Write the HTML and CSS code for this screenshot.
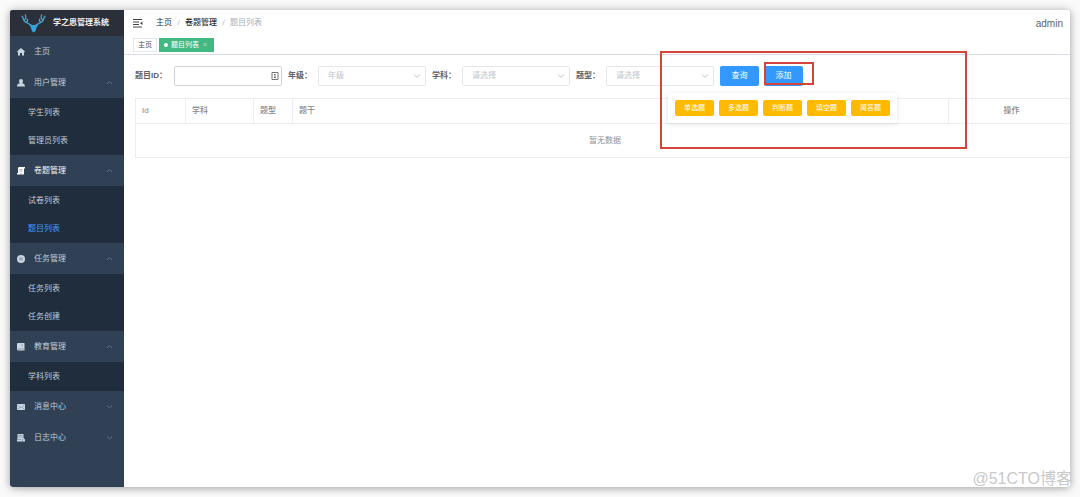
FILE: index.html
```html
<!DOCTYPE html>
<html lang="zh-CN">
<head>
<meta charset="utf-8">
<title>学之思管理系统</title>
<link rel="stylesheet" href="styles.css">
</head>
<body>
<div class="window">
  <aside class="sidebar">
    <div class="brand">
      <svg class="brand-logo" viewBox="0 0 26 20" aria-hidden="true">
        <g fill="none" stroke="#4ba6cc" stroke-width="1.3" stroke-linecap="round">
          <path d="M11 13C8 9.500 3 10 2.500 6C2.300 4.500 1.500 3.500 1 3M3 7C5 6.500 5.500 4 4.500 1.500M5.500 9.500C7 8.500 7 7 6.500 6"/>
          <path d="M15 13C18 9.500 23 10 23.500 6C23.700 4.500 24.500 3.500 25 3M23 7C21 6.500 20.500 4 21.500 1.500M20.500 9.500C19 8.500 19 7 19.500 6"/>
        </g>
        <path fill="#35a3dc" d="M6.500 9.500L11.500 12h3l5-2.500l-3 4.500l-1.500 4.500L13 20l-1.500-1.500L10 14z"/>
      </svg>
      <span>学之思管理系统</span>
    </div>
    <nav>
      <a class="item" href="#"><svg class="icon" viewBox="0 0 16 16"><path d="M8 0L0 7l1 1.500L2 8v7h4v-5h4v5h4V8l1 .5L16 7z"/></svg><span>主页</span></a>
      <a class="item" href="#"><svg class="icon" viewBox="0 0 16 16"><path d="M8 0a4 4 0 0 1 4 4c0 2-1 3.500-2 4.500c3 .8 6 1.500 6 6.500H0c0-5 3-5.700 6-6.500C5 7.500 4 6 4 4a4 4 0 0 1 4-4z"/></svg><span>用户管理</span><svg class="arrow" viewBox="0 0 8 8"><path d="M1 5.500L4 3l3 2.500"/></svg></a>
      <div class="submenu"><a href="#">学生列表</a><a href="#">管理员列表</a></div>
      <a class="item current" href="#"><svg class="icon" viewBox="0 0 16 16"><path d="M3 0h13v3h-2v12H0v-3h2V3z"/><path class="cut" d="M5 5h6M5 8h6M8 11v4"/></svg><span>卷题管理</span><svg class="arrow" viewBox="0 0 8 8"><path d="M1 5.500L4 3l3 2.500"/></svg></a>
      <div class="submenu"><a href="#">试卷列表</a><a class="selected" href="#">题目列表</a></div>
      <a class="item" href="#"><svg class="icon" viewBox="0 0 16 16"><circle cx="8" cy="8" r="8"/><path class="cut" d="M4 6h8M4 8h8M5 10h6"/></svg><span>任务管理</span><svg class="arrow" viewBox="0 0 8 8"><path d="M1 5.500L4 3l3 2.500"/></svg></a>
      <div class="submenu"><a href="#">任务列表</a><a href="#">任务创建</a></div>
      <a class="item" href="#"><svg class="icon" viewBox="0 0 16 16"><path d="M1 0h14v15H2L0 13V2z"/><path class="cut" d="M2 12h12M10 2v5"/></svg><span>教育管理</span><svg class="arrow" viewBox="0 0 8 8"><path d="M1 5.500L4 3l3 2.500"/></svg></a>
      <div class="submenu"><a href="#">学科列表</a></div>
      <a class="item" href="#"><svg class="icon" viewBox="0 0 16 16"><path d="M0 2h16v12H0z"/><path class="cut" d="M1 4l7 6l7-6M1 13l4-4M15 13l-4-4"/></svg><span>消息中心</span><svg class="arrow" viewBox="0 0 8 8"><path d="M1 3l3 2.500L7 3"/></svg></a>
      <a class="item" href="#"><svg class="icon" viewBox="0 0 16 16"><path d="M1 0h12v8l3 3v4H0v-4h1z"/><path class="cut" d="M3 3h8M3 6h8M2 11h6M11 9v5"/></svg><span>日志中心</span><svg class="arrow" viewBox="0 0 8 8"><path d="M1 3l3 2.500L7 3"/></svg></a>
    </nav>
  </aside>
  <main class="main">
    <header class="topbar">
      <button class="fold" aria-label="收起菜单"><svg viewBox="0 0 10 10"><path d="M0 1.500h9M0 4h6M0 6.500h6M0 9h9" fill="none" stroke="#444" stroke-width="1"/><path d="M9.500 3.500v3.500L7 5.200z" fill="#444"/></svg></button>
      <nav class="crumbs"><a href="#">主页</a><i>/</i><a class="strong" href="#">卷题管理</a><i>/</i><span>题目列表</span></nav>
      <span class="user">admin</span>
    </header>
    <div class="tags">
      <a class="tag" href="#">主页</a>
      <a class="tag active" href="#"><span class="dot"></span>题目列表<span class="close">×</span></a>
    </div>
    <section class="content">
      <form class="filters">
        <label for="qid">题目ID：</label>
        <div class="field"><input id="qid" type="text"><svg class="autofill" viewBox="0 0 8 8"><path d="M1 .5h6v7H1zM4 2v3.500M3 2.500h1M3 5.500h2" fill="none" stroke="#777"/></svg></div>
        <label for="grade">年级：</label>
        <div class="field"><select id="grade"><option>年级</option></select><svg class="chevron" viewBox="0 0 8 8"><path d="M1 2.500L4 5.500l3-3"/></svg></div>
        <label for="subject">学科：</label>
        <div class="field"><select id="subject"><option>请选择</option></select><svg class="chevron" viewBox="0 0 8 8"><path d="M1 2.500L4 5.500l3-3"/></svg></div>
        <label for="type">题型：</label>
        <div class="field"><select id="type"><option>请选择</option></select><svg class="chevron" viewBox="0 0 8 8"><path d="M1 2.500L4 5.500l3-3"/></svg></div>
        <button class="primary" type="button">查询</button>
        <div class="add">
          <button class="primary" type="button">添加</button>
          <div class="mark mark-button"></div>
          <div class="popover">
            <button type="button">单选题</button><button type="button">多选题</button><button type="button">判断题</button><button type="button">填空题</button><button type="button">简答题</button>
          </div>
          <div class="mark mark-area"></div>
        </div>
      </form>
      <table class="list">
        <colgroup><col class="c-id"><col class="c-subject"><col class="c-type"><col><col class="c-action"></colgroup>
        <thead><tr><th>Id</th><th>学科</th><th>题型</th><th>题干</th><th class="center">操作</th></tr></thead>
        <tbody><tr><td colspan="5">暂无数据</td></tr></tbody>
      </table>
    </section>
  </main>
</div>
<div class="watermark">@51CTO博客</div>
</body>
</html>
```
FILE: styles.css
```css
* { box-sizing: border-box; }
body {
  margin: 0;
  padding: 10px;
  height: 100vh;
  background: #fafafa;
  color: #606266;
  font: 8px/12px "Liberation Sans", "Noto Sans CJK SC", sans-serif;
  overflow: hidden;
}
a { color: inherit; text-decoration: none; }
button, input, select { font: inherit; margin: 0; }
.window {
  display: flex;
  height: 100%;
  border-radius: 3px;
  overflow: hidden;
  background: #fff;
  box-shadow: 0 1px 8px rgba(0, 0, 0, .38);
}

.sidebar { flex: 0 0 114px; background: #304156; color: #bfcbd9; }
.brand {
  display: flex;
  align-items: center;
  gap: 7px;
  height: 26px;
  padding: 0 11px;
  background: #2b2f3a;
  color: #f0f0f0;
  font-weight: bold;
  white-space: nowrap;
}
.brand-logo { width: 25px; height: 20px; flex: none; }
.item { display: flex; align-items: center; height: 31px; padding: 0 11px 0 7px; }
.item span { flex: 1; }
.icon { width: 8px; height: 8px; margin-right: 9px; fill: #c9d6e2; }
.icon .cut { fill: none; stroke: #5d6f82; stroke-width: 1; }
.arrow { width: 7px; height: 7px; fill: none; stroke: #66778b; stroke-width: 1; }
.current { color: #f4f4f5; }
.current .icon { fill: #fff; }
.submenu { padding-top: 1px; background: #1f2d3d; }
.submenu a { display: flex; align-items: center; height: 28px; padding-left: 18px; }
.submenu .selected { color: #409eff; }

.main { flex: 1; min-width: 0; }
.topbar { display: flex; align-items: center; height: 25px; padding: 0 7px 0 9px; }
.fold { display: flex; padding: 0; border: 0; background: none; }
.fold svg { width: 10px; height: 10px; }
.crumbs { display: flex; flex: 1; margin-left: 13px; color: #303133; }
.crumbs i { width: 13px; text-align: center; color: #b4b8c0; font-style: normal; }
.crumbs .strong { font-weight: 500; }
.crumbs span { color: #a8afb8; }
.user { padding-top: 3px; font-size: 10px; }
.tags { display: flex; gap: 2px; height: 20px; padding: 3px 9px 2px; border-bottom: 1px solid #d8dce5; }
.tag {
  display: flex;
  align-items: center;
  padding: 0 4px;
  border: 1px solid #e4e7ee;
  color: #495060;
  font-size: 7px;
}
.tag.active { border-color: #42b983; background: #42b983; color: #fff; }
.dot { width: 4px; height: 4px; margin-right: 3px; border-radius: 50%; background: #fff; }
.close { margin: 0 2px 0 4px; font-size: 7px; opacity: .6; }

.content { padding: 11px 0 0 11px; }
.filters { display: flex; align-items: center; height: 20px; }
.filters label { flex: none; width: 30px; font-weight: bold; white-space: nowrap; }
.filters label:first-child { width: 39px; }
.field { position: relative; flex: 0 1 108px; margin-right: 6px; }
.field input, .field select {
  display: block;
  width: 100%;
  height: 20px;
  padding: 0 9px;
  border: 1px solid #e4e7ed;
  border-radius: 2px;
  background: #fff;
  color: #c0c4cc;
  appearance: none;
}
.field input { border-color: #cfd2d8; color: #606266; }
.chevron, .autofill { position: absolute; right: 5px; top: 6px; width: 8px; height: 8px; pointer-events: none; }
.autofill { right: 3px; }
.chevron { fill: none; stroke: #c0c4cc; stroke-width: 1; }
.primary {
  width: 39px;
  height: 20px;
  padding: 0;
  border: 0;
  border-radius: 2px;
  background: #3399ff;
  color: #fff;
}
.add { position: relative; margin-left: 5px; }
.popover {
  position: absolute;
  top: 27px;
  right: -94px;
  display: flex;
  gap: 5px;
  padding: 7px;
  border-radius: 2px;
  background: #fff;
  box-shadow: 0 1px 5px rgba(0, 0, 0, .12);
}
.popover button {
  width: 39px;
  height: 16px;
  padding: 0;
  border: 0;
  border-radius: 2px;
  background: #ffba00;
  color: #fff;
  font-size: 7px;
}
.mark { position: absolute; border: 2px solid #d6433b; pointer-events: none; }
.mark-button { left: 0; top: -4px; width: 50px; height: 23px; }
.mark-area { left: -104px; top: -15px; width: 307px; height: 98px; }

.list {
  width: calc(100% + 5px);
  margin-top: 12px;
  border-collapse: collapse;
  table-layout: fixed;
  border: 1px solid #ebeef5;
}
.list th {
  height: 25px;
  padding: 0 6px;
  border: 1px solid #ebeef5;
  color: #84878d;
  font-weight: 500;
  text-align: left;
}
.list .center { text-align: center; }
.list td { height: 34px; padding: 0; color: #909399; text-align: center; }
.c-id { width: 50px; }
.c-subject { width: 68px; }
.c-type { width: 39px; }
.c-action { width: 126px; }

.watermark {
  position: absolute;
  right: 8px;
  bottom: 8px;
  color: #c8c8c8;
  font-size: 16px;
  line-height: 20px;
}
```
